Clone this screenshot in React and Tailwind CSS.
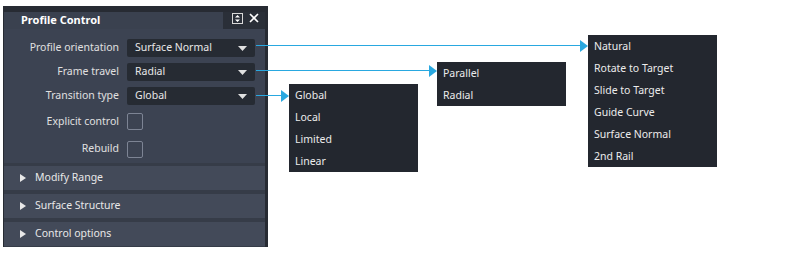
import React from 'react'

const font = { fontFamily: '"Noto Sans", "Open Sans", sans-serif' }

function Dropdown({ value }) {
  return (
    <div className="flex items-center justify-between w-[128px] h-[18px] rounded-[2px] bg-[#262b33] pl-[8px] pr-[8px] text-[#e8e8e8]">
      <span>{value}</span>
      <svg width="9" height="5" viewBox="0 0 9 5"><path d="M0 0h9L4.5 5z" fill="#e0e0e0" /></svg>
    </div>
  )
}

function Row({ label, children, h = 'h-[24px]' }) {
  return (
    <div className={`flex items-center ${h}`}>
      <div className="w-[123px] text-right pr-[8px] text-[#e0e0e0]">{label}</div>
      {children}
    </div>
  )
}

function Checkbox() {
  return <div className="w-[16px] h-[17px] rounded-[2px] border border-[#7d8494] bg-[#3c4352]" />
}

function Section({ title }) {
  return (
    <div className="flex items-center h-[24px] bg-[#434a59] pl-[16px] text-[#e8e8e8]">
      <svg width="6" height="8" viewBox="0 0 6 8" className="mr-[9px]"><path d="M0 0l6 4-6 4z" fill="#e8e8e8" /></svg>
      {title}
    </div>
  )
}

function Popup({ items, className }) {
  return (
    <div className={`absolute bg-[#23272f] pl-[6px] pt-[1px] ${className}`}>
      {items.map((t) => (
        <div key={t} className="h-[22px] flex items-center text-[#ececec]">{t}</div>
      ))}
    </div>
  )
}

export default function App() {
  return (
    <div className="relative w-[800px] h-[276px] bg-white text-[10.5px]" style={font}>
      {/* panel */}
      <div className="absolute left-[3px] top-[6px] w-[265px] h-[241px] bg-[#3c4352] border-l border-r-[3px] border-t-[6px] border-[#272b33] flex flex-col">
        <div className="flex h-[17px]">
          <div className="flex-1 bg-[#3a414f] pl-[17px] flex items-center font-bold text-[11px] text-white">Profile Control</div>
          <div className="w-[42px] bg-[#2a2f38] flex items-start justify-end pr-[6px] gap-[6px] pt-[1px]">
            <div className="w-[11px] h-[11px] border border-[#d8d8d8] flex items-center justify-center">
              <svg width="5" height="7" viewBox="0 0 5 7"><path d="M2.5 0L5 2.5H0zM2.5 7L0 4.5h5z" fill="#fff" /></svg>
            </div>
            <svg width="10" height="10" viewBox="0 0 10 10"><path d="M1 1l8 8M9 1L1 9" stroke="#fff" strokeWidth="1.6" /></svg>
          </div>
        </div>
        <div className="pt-[7px]">
          <Row label="Profile orientation"><Dropdown value="Surface Normal" /></Row>
          <Row label="Frame travel"><Dropdown value="Radial" /></Row>
          <Row label="Transition type"><Dropdown value="Global" /></Row>
          <Row label="Explicit control" h="h-[27px]"><Checkbox /></Row>
          <Row label="Rebuild" h="h-[28px]"><Checkbox /></Row>
        </div>
        <div className="flex flex-col gap-[4px] bg-[#363c48] pt-[3px] flex-1">
          <Section title="Modify Range" />
          <Section title="Surface Structure" />
          <Section title="Control options" />
        </div>
      </div>

      {/* connectors */}
      <svg className="absolute left-0 top-0" width="800" height="276">
        <g stroke="#29a8e0" strokeWidth="1">
          <line x1="256" y1="45.5" x2="581" y2="45.5" />
          <line x1="256" y1="70.5" x2="430" y2="70.5" />
          <line x1="256" y1="95.5" x2="282" y2="95.5" />
        </g>
        <g fill="#29a8e0">
          <path d="M580 40l8 6-8 6z" />
          <path d="M429 65l8 6-8 6z" />
          <path d="M281 90l8 6-8 6z" />
        </g>
      </svg>

      <Popup className="left-[289px] top-[84px] w-[129px] h-[88px]" items={['Global', 'Local', 'Limited', 'Linear']} />
      <Popup className="left-[437px] top-[62px] w-[129px] h-[44px]" items={['Parallel', 'Radial']} />
      <Popup className="left-[588px] top-[35px] w-[129px] h-[132px]" items={['Natural', 'Rotate to Target', 'Slide to Target', 'Guide Curve', 'Surface Normal', '2nd Rail']} />
    </div>
  )
}
